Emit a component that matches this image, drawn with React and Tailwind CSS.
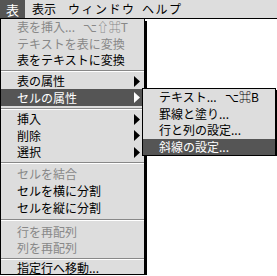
import React from "react";

const Tri = ({ white }) => (
  <svg width="6" height="11" viewBox="0 0 6 11" className="block">
    <polygon points="0,0 6,5.5 0,11" fill={white ? "#fff" : "#000"} />
  </svg>
);

const Row = ({ label, shortcut, disabled, arrow, active, h = "h-[16.5px]" }) => (
  <div
    className={`${h} flex items-center pl-[16px] pr-[4px] ${
      active ? "bg-[#555555] text-white" : disabled ? "text-[#888888]" : "text-black"
    }`}
  >
    <span className="flex-1 whitespace-nowrap">{label}</span>
    {shortcut && <span className="whitespace-nowrap pr-[12px]">{shortcut}</span>}
    {arrow && <Tri white={active} />}
  </div>
);

const Sep = ({ h = "h-[5px]" }) => (
  <div className={`${h} flex flex-col justify-center`}>
    <div className="h-px bg-[#888888]" />
    <div className="h-px bg-white" />
  </div>
);

export default function App() {
  return (
    <div className="relative w-[277px] h-[276px] bg-white overflow-hidden font-['Noto_Sans_CJK_JP',sans-serif] text-[12px] leading-none">
      <div className="h-[19px] bg-[#dddddd] border-b border-black flex">
        <div className="w-[25px] shrink-0 bg-[#555555] text-white flex items-center justify-center text-[13px]">表</div>
        <div className="w-[43px] shrink-0 pl-[7px] flex items-center">表示</div>
        <div className="w-[74px] shrink-0 flex items-center tracking-[1.5px]">ウィンドウ</div>
        <div className="flex items-center tracking-[1.5px]">ヘルプ</div>
      </div>
      <div className="w-[147px] flex">
        <div className="w-[145px] bg-[#dddddd] border-l border-r border-b border-black">
          <Row label="表を挿入..." shortcut="⌥⇧⌘T" disabled />
          <Row label="テキストを表に変換" disabled />
          <Row label="表をテキストに変換" />
          <Sep h="h-[4.5px]" />
          <Row label="表の属性" arrow h="h-[16px]" />
          <Row label="セルの属性" arrow active h="h-[17px]" />
          <Sep />
          <Row label="挿入" arrow />
          <Row label="削除" arrow />
          <Row label="選択" arrow />
          <Sep />
          <Row label="セルを結合" disabled h="h-[17px]" />
          <Row label="セルを横に分割" h="h-[17px]" />
          <Row label="セルを縦に分割" h="h-[17px]" />
          <Sep h="h-[7px]" />
          <Row label="行を再配列" disabled />
          <Row label="列を再配列" disabled />
          <Sep />
          <Row label="指定行へ移動..." h="h-[12px]" />
        </div>
        <div className="w-[2px] mt-[2px] bg-black" />
      </div>
      <div className="absolute left-[142px] top-[88px] flex">
        <div className="w-[134px] bg-[#dddddd] border border-black">
          <Row label="テキスト..." shortcut="⌥⌘B" />
          <Row label="罫線と塗り..." />
          <Row label="行と列の設定..." />
          <Row label="斜線の設定..." active />
        </div>
        <div className="w-px mt-[2px] bg-black" />
      </div>
    </div>
  );
}
